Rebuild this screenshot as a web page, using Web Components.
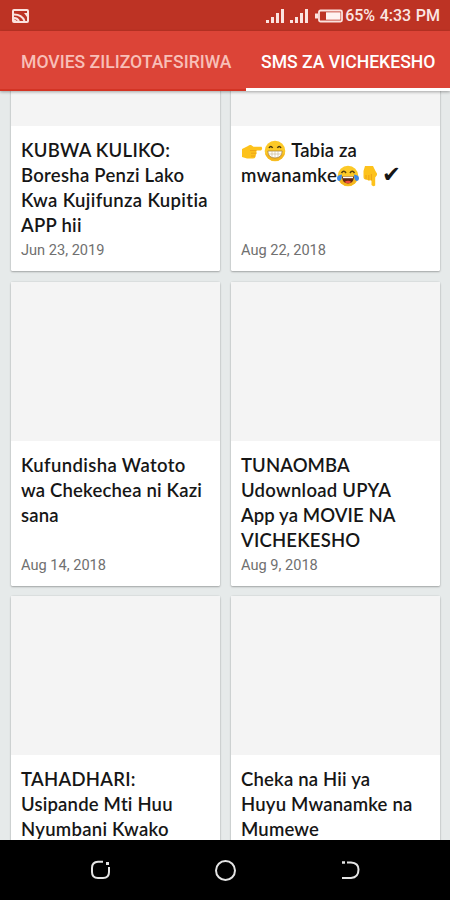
<!DOCTYPE html>
<html lang="sw">
<head>
<meta charset="utf-8">
<title>SMS za Vichekesho</title>
<style>
html,body{margin:0;height:100%;overflow:hidden}
</style>
</head>
<body>
<app-screen></app-screen>
<script>
const define = (name, html, init) => customElements.define(name, class extends HTMLElement {
  constructor() {
    super();
    this.attachShadow({ mode: 'open' }).innerHTML = html;
  }
  connectedCallback() { if (init) init(this, this.shadowRoot); }
});

const signal = `<svg class="sig" width="20" height="16" viewBox="0 0 20 16" fill="#fbe3df"><rect x="1" y="12" width="3" height="3"/><rect x="6" y="9" width="3" height="6"/><rect x="11" y="5" width="3" height="10"/><rect x="16" y="1" width="3" height="14"/></svg>`;

define('status-bar', `<style>
:host{display:flex;height:31px;box-sizing:border-box;background:#bd3324;color:#fbe6e3;padding:0 10px 0 12px;align-items:center;font:500 16px/31px Roboto,sans-serif}
svg{display:block;flex:none}
.gap{flex:1}
.sig{margin-right:4px}
.bat{margin:0 2px 0 2px}
span{white-space:pre;word-spacing:.6px}
</style>
<svg width="17" height="14" viewBox="0 0 17 14"><rect x="1" y="1" width="15" height="12" rx="1" fill="none" stroke="#fbe3df" stroke-width="2"/><path d="M2 5.500C7 5.500 10.500 7 12.500 12M2 9Q5 8.800 7 12" fill="none" stroke="#fbe3df" stroke-width="2"/><path d="M2 10L5 12H2ZM12 4H15V8Z" fill="#fbe3df"/></svg>
<div class="gap"></div>${signal}${signal}
<svg class="bat" width="28" height="14" viewBox="0 0 28 14"><path d="M0 4.500H3V9.500H0Z" fill="#fbe3df"/><rect x="4" y="1.500" width="23" height="11" rx="1.500" fill="none" stroke="#fbe3df" stroke-width="1.800"/><rect x="11" y="3.300" width="14.500" height="7.400" fill="#fff3f1"/></svg>
<span>65% 4:33 PM</span>`);

define('tab-item', `<style>
:host{display:block;box-sizing:border-box;height:60px;white-space:nowrap;color:#f8bfb7;font:500 17.600px/62px Roboto,sans-serif}
:host([active]){color:#fff;border-bottom:3px solid #fff}
</style><slot></slot>`);

define('tab-bar', `<style>
:host{display:flex;height:60px;box-sizing:border-box;background:#dc4437;border-bottom:2px solid #d33424;box-shadow:0 1px 3px #0005;position:relative;z-index:2}
tab-item:first-of-type{width:246px;padding-left:21px}
tab-item:last-of-type{flex:1;padding-left:15px}
</style><tab-item>MOVIES ZILIZOTAFSIRIWA</tab-item><tab-item active>SMS ZA VICHEKESHO</tab-item>`);

define('emoji-icon', `<style>:host{display:inline-block;width:22px;height:22px;margin-right:1px;vertical-align:-5px}svg{display:block}</style>`, (el, root) => {
  const face = '<circle cx="11" cy="11" r="10.300" fill="#fcc927"/><path d="M1 13A10.300 10.300 0 0 0 21 13Q11 20 1 13Z" fill="#f4b51f"/>';
  const hand = '<path d="M20.500 6.800H12.500L10 5Q8.500 4.500 7 6L1 9V17L6 18.500H12Q14.500 18.500 14.500 16L15 14.500Q16.300 13 15.300 12L15.500 10.500H20Q22 9 20.500 6.800Z" fill="#fdc21c"/><path d="M9 10.600H15.500M10 13.200H15M10 16H14.500" stroke="#e99a17" stroke-width=".8"/>';
  const art = {
    right: hand,
    down: `<g transform="translate(22 0) rotate(90)">${hand}</g>`,
    grin: face + '<path d="M5 8Q6.800 4.800 8.600 8M13.400 8Q15.200 4.800 17 8" fill="none" stroke="#4c3911" stroke-width="1.500"/><path d="M3.800 11H18.200Q18 18 11 18T3.800 11Z" fill="#fff" stroke="#a8833b" stroke-width=".8"/><path d="M4.500 14H17.500M8 11V17.500M11 11V18M14 11V17.500" stroke="#c8b78d" stroke-width=".6"/>',
    joy: face + '<path d="M4.500 8Q6.800 4.500 9 8M13 8Q15.200 4.500 17.500 8" fill="none" stroke="#59420f" stroke-width="1.500"/><path d="M5 11.500H17Q16.500 18.500 11 18.500T5 11.500Z" fill="#60250f"/><path d="M6 11.700H16V13.200H6Z" fill="#fff"/><path d="M7.500 17Q11 14.500 14.500 17Q11 19.500 7.500 17Z" fill="#ed4b3e"/><path d="M5 9.500Q0 10 0 13T2.500 16Q5 15 5 9.500ZM17 9.500Q22 10 22 13T19.500 16Q17 15 17 9.500Z" fill="#3c88e8"/>'
  }[el.getAttribute('name')];
  root.innerHTML += `<svg width="22" height="22" viewBox="0 0 22 22">${art}</svg>`;
});

define('post-card', `<style>
:host{display:block;height:304px;background:#fff;border-radius:1.5px;box-shadow:0 1px 2px #0004,0 0 2px #0002;box-sizing:border-box}
.thumb{height:159px;background:#f4f4f4}
.body{padding:12px 0 0 10px}
.title{height:100px;color:#161616;font:600 18.500px/25px Lato,sans-serif;font-variant-ligatures:none;white-space:nowrap}
.date{font:400 14.600px/24px Roboto,sans-serif;color:#707070}
</style><div class="thumb"></div><div class="body"><div class="title"><slot></slot></div><div class="date"><slot name="date"></slot></div></div>`);

define('nav-bar', `<style>
:host{display:flex;height:60px;background:#000;justify-content:space-between;align-items:center;padding:0 89px;box-sizing:border-box;position:relative;z-index:2}
svg{fill:none;stroke:#e4e4e4;stroke-width:2}
</style>
<svg width="22" height="22" viewBox="0 0 22 22"><path d="M14 2.800H9Q3 3 3 9V13Q3 19 9 19H14Q20 19 20 13V8"/><path d="M17 4.500H20" stroke-width="3"/></svg>
<svg width="24" height="24" viewBox="0 0 24 24"><circle cx="12.500" cy="12.500" r="9.500"/></svg>
<svg width="22" height="22" viewBox="0 0 22 22"><path d="M8 3.500H12Q19.500 4 19.500 10.500Q19.500 18.500 12 19H3"/><path d="M3 3.500H6" stroke-width="2.500"/></svg>`);

define('app-screen', `<style>
:host{display:grid;grid-template-rows:31px 60px 749px 60px;width:450px;height:900px;background:#e6eaea;overflow:hidden}
.feed{overflow:hidden}
.grid{display:grid;grid-template-columns:209px 209px;gap:10.500px 11px;padding:0 10px 0 11px;margin-top:-124px}
p{margin:0;letter-spacing:.27px}
.t1{letter-spacing:.1px}
.t2{letter-spacing:.19px}
.t3{letter-spacing:.36px}
.check{font:22.500px/20px "DejaVu Sans",sans-serif;margin-left:-1px;letter-spacing:0}
</style>
<status-bar></status-bar><tab-bar></tab-bar>
<div class="feed"><div class="grid">
<post-card><p>KUBWA KULIKO:</p><p>Boresha Penzi Lako</p><p class="t3">Kwa Kujifunza Kupitia</p><p>APP hii</p><span slot="date">Jun 23, 2019</span></post-card>
<post-card><p class="t1"><emoji-icon name="right"></emoji-icon><emoji-icon name="grin"></emoji-icon> Tabia za</p><p class="t3">mwanamke<emoji-icon name="joy"></emoji-icon><emoji-icon name="down"></emoji-icon><span class="check">✔</span></p><span slot="date">Aug 22, 2018</span></post-card>
<post-card><p class="t3">Kufundisha Watoto</p><p class="t2">wa Chekechea ni Kazi</p><p class="t2">sana</p><span slot="date">Aug 14, 2018</span></post-card>
<post-card><p class="t1">TUNAOMBA</p><p>Udownload UPYA</p><p class="t1">App ya MOVIE NA</p><p class="t2">VICHEKESHO</p><span slot="date">Aug 9, 2018</span></post-card>
<post-card><p>TAHADHARI:</p><p class="t2">Usipande Mti Huu</p><p>Nyumbani Kwako</p></post-card>
<post-card><p class="t2">Cheka na Hii ya</p><p class="t2">Huyu Mwanamke na</p><p class="t2">Mumewe</p></post-card>
</div></div>
<nav-bar></nav-bar>`);
</script>
</body>
</html>
